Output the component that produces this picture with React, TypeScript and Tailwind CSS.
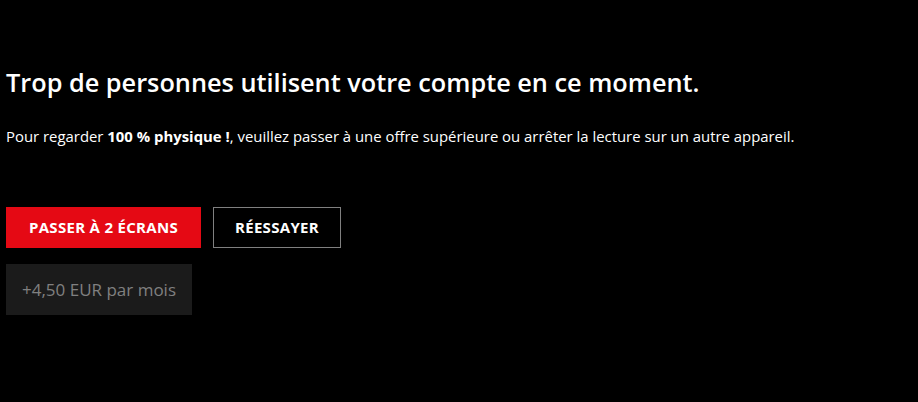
export default function App() {
  return (
    <div className="w-[918px] h-[402px] bg-black text-white px-[6px] pt-[64px]" style={{ fontFamily: '"Open Sans", "Noto Sans", sans-serif' }}>
      <h1 className="text-[25.3px] leading-[36px] font-semibold">Trop de personnes utilisent votre compte en ce moment.</h1>
      <p className="mt-[26px] text-[14.9px] leading-[20px]">
        Pour regarder <span className="font-bold">100 % physique !</span>, veuillez passer à une offre supérieure ou arrêter la lecture sur un autre appareil.
      </p>
      <div className="mt-[61px] flex gap-[12px]">
        <button className="w-[195px] h-[41px] bg-[#e50914] text-white text-[15px] tracking-[0.3px] font-bold uppercase">PASSER À 2 ÉCRANS</button>
        <button className="w-[128px] h-[41px] border border-[#808080] text-white text-[15px] tracking-[0.3px] font-bold">RÉESSAYER</button>
      </div>
      <div className="mt-[16px] w-[186px] h-[51px] bg-[#1b1b1b] text-[#808080] text-[17px] flex items-center justify-center">+4,50 EUR par mois</div>
    </div>
  );
}
